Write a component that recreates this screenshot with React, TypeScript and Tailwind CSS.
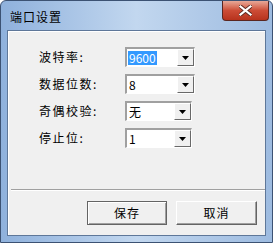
import React from "react";

const cjk = { fontFamily: '"Noto Sans CJK SC", "Noto Sans", sans-serif' };

type ComboProps = { value: string; selected?: boolean; width: string };

const Combo = ({ value, selected, width }: ComboProps) => {
  return (
    <div
      className={`${width} h-[20px] flex border-t-2 border-l-2 border-[#a0a0a0] border-b border-r border-b-white border-r-white bg-white`}
    >
      <div className="flex-1 flex items-center pl-[1px] text-[12px] leading-none text-black">
        <span className={selected ? "bg-[#3399ff] text-white px-[1px] py-[1px]" : "px-[1px]"}>
          {value}
        </span>
      </div>
      {/* drop arrow button */}
      <div className="w-[17px] h-full flex items-center justify-center bg-[#f0f0f0] border-t border-l border-white border-b border-r border-b-[#696969] border-r-[#696969]">
        <svg width="7" height="4" viewBox="0 0 7 4">
          <path d="M0 0h7L3.5 4z" fill="#000" />
        </svg>
      </div>
    </div>
  );
};

const rows = [
  { label: "波特率:", value: "9600", selected: true, width: "w-[70px]" },
  { label: "数据位数:", value: "8", width: "w-[70px]" },
  { label: "奇偶校验:", value: "无", width: "w-[67px]" },
  { label: "停止位:", value: "1", width: "w-[67px]" },
];

const App = () => {
  return (
    <div className="w-[273px] h-[243px] bg-white" style={cjk}>
      <div className="w-full h-full flex flex-col rounded-t-[6px] border border-[#3c5273] bg-gradient-to-r from-[#8fb1dc] via-[#c2d7ef] to-[#9dbbe0] overflow-hidden">
        {/* title bar */}
        <div className="h-[29px] flex items-start justify-between shrink-0">
          <span className="mt-[10px] ml-[9px] text-[12px] leading-[12px] tracking-[1px] text-black">端口设置</span>
          <div className="mr-[3px] w-[47px] h-[20px] rounded-b-[4px] border border-t-0 border-[#5a2620] bg-gradient-to-b from-[#e6a898] via-[#cc4c36] to-[#b7321c] flex items-center justify-center">
            <svg width="13" height="11" viewBox="0 0 13 11">
              <path d="M1.5 1.5L11.5 9.5M11.5 1.5L1.5 9.5" stroke="#5b2a22" strokeWidth="4" strokeLinecap="square" />
              <path d="M1.5 1.5L11.5 9.5M11.5 1.5L1.5 9.5" stroke="#fff" strokeWidth="2.2" strokeLinecap="square" />
            </svg>
          </div>
        </div>

        {/* client area */}
        <div className="flex-1 mx-[6px] mb-[6px] border border-[#5e7799] flex flex-col bg-[#f0f0f0] shadow-[inset_1px_1px_0_#fff]">
          <div className="flex flex-col gap-[7px] pt-[16px] pl-[31px]">
            {rows.map((r) => (
              <div key={r.label} className="flex items-center h-[20px]">
                <span className="w-[86px] text-[12px] leading-none tracking-[1.5px] text-black">{r.label}</span>
                <Combo value={r.value} selected={r.selected} width={r.width} />
              </div>
            ))}
          </div>

          <div className="mt-auto ml-[3px] h-0 border-t border-t-[#a0a0a0] border-b border-b-white" />

          <div className="flex justify-end gap-[9px] pr-[8px] pt-[10px] pb-[10px]">
            <button className="w-[80px] h-[24px] text-[12px] tracking-[1px] text-black bg-[#f0f0f0] border border-[#646464] shadow-[inset_1px_1px_0_#fff,inset_-1px_-1px_0_#a0a0a0]">
              保存
            </button>
            <button className="w-[81px] h-[24px] text-[12px] tracking-[1px] text-black bg-[#f0f0f0] border border-t-white border-l-white border-b-[#646464] border-r-[#646464] shadow-[inset_-1px_-1px_0_#a0a0a0]">
              取消
            </button>
          </div>
        </div>
      </div>
    </div>
  );
};

export default App;
